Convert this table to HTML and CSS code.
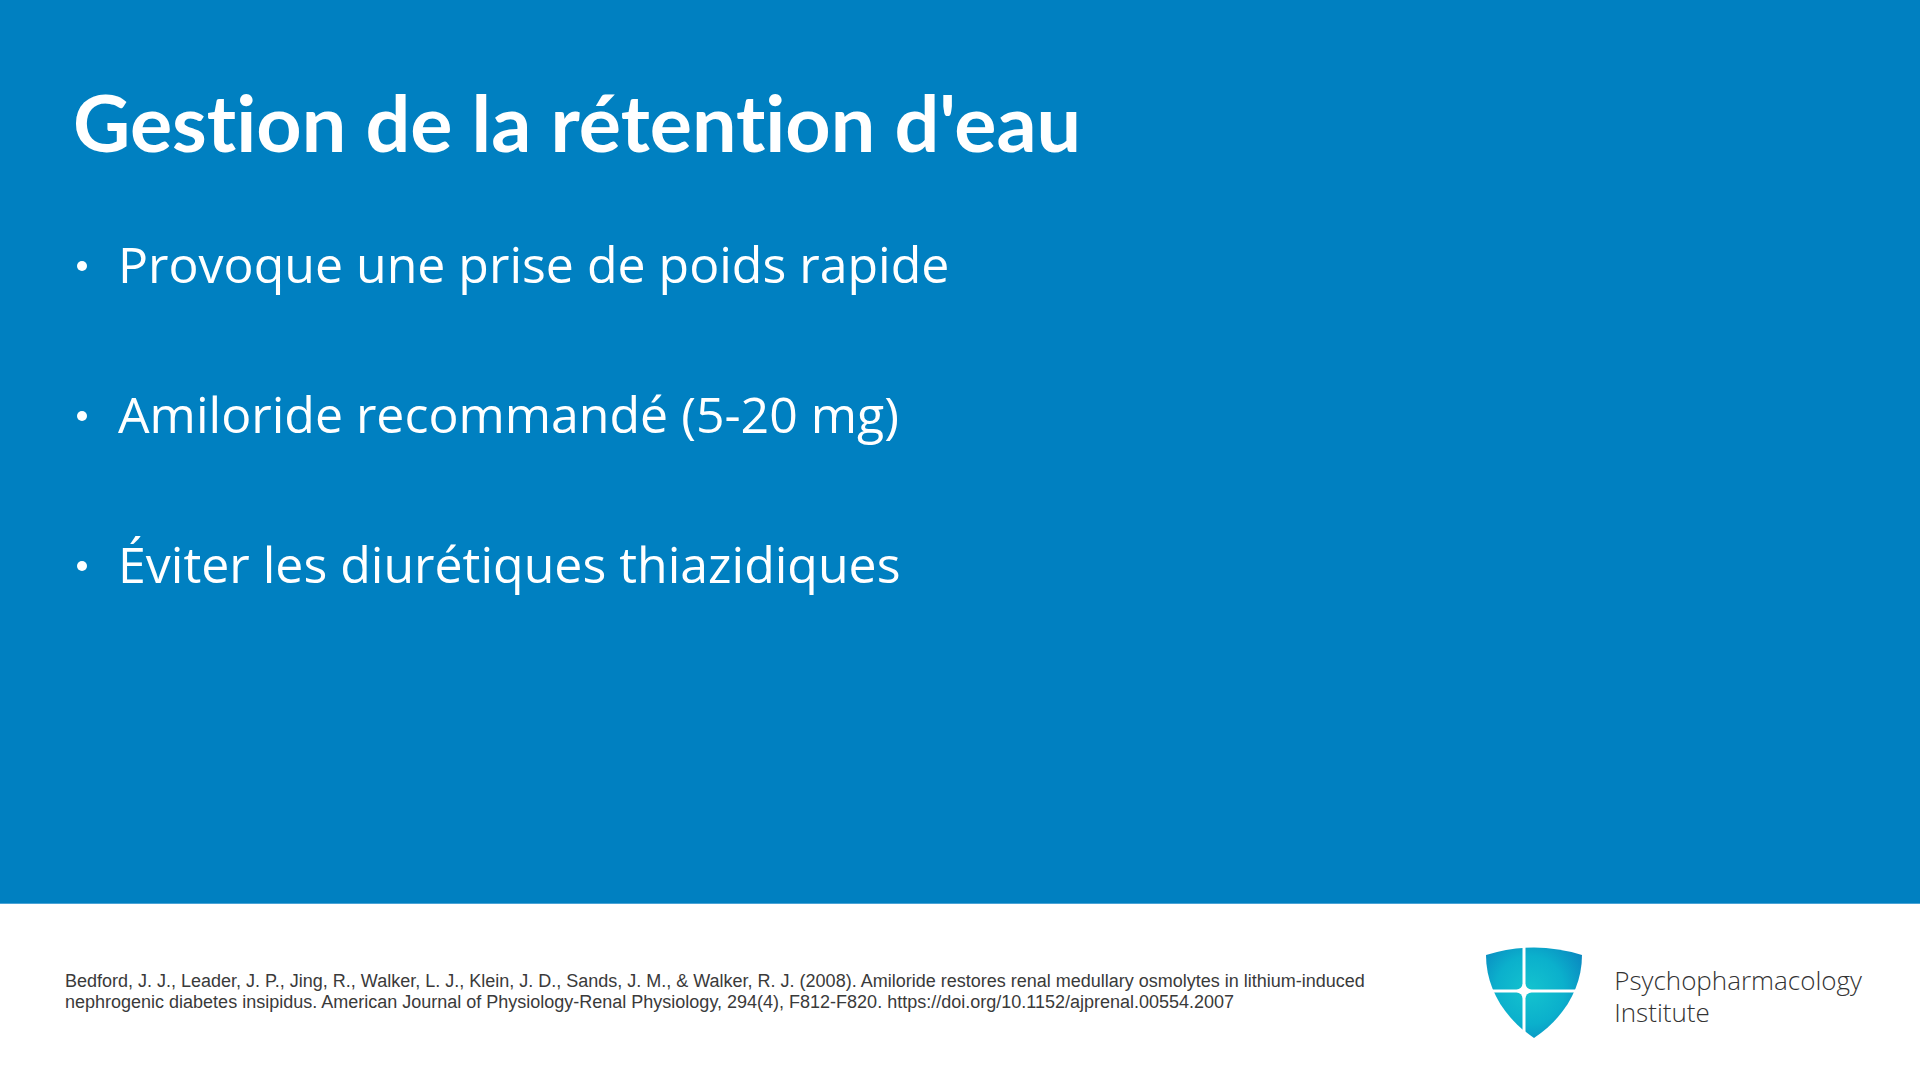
FILE: index.html
```html
<!DOCTYPE html>
<html lang="fr">
<head>
<meta charset="utf-8">
<title>Gestion de la rétention d'eau</title>
<link rel="stylesheet" href="styles.css">
</head>
<body>
<main class="slide">
  <section class="content">
    <h1 class="title">Gestion de la rétention d'eau</h1>
    <ul class="bullets">
      <li class="bullet"><span class="dot"></span><span>Provoque une prise de poids rapide</span></li>
      <li class="bullet"><span class="dot"></span><span>Amiloride recommandé (5-20 mg)</span></li>
      <li class="bullet"><span class="dot"></span><span>Éviter les diurétiques thiazidiques</span></li>
    </ul>
  </section>
  <footer class="footer">
    <p class="citation">Bedford, J. J., Leader, J. P., Jing, R., Walker, L. J., Klein, J. D., Sands, J. M., &amp; Walker, R. J. (2008). Amiloride restores renal medullary osmolytes in lithium-induced<br>nephrogenic diabetes insipidus. American Journal of Physiology-Renal Physiology, 294(4), F812-F820. https://doi.org/10.1152/ajprenal.00554.2007</p>
    <div class="logo">
      <svg class="shield" width="96" height="92" viewBox="0 0 96 92" aria-hidden="true">
        <defs>
          <clipPath id="shieldClip">
            <path d="M0,9 Q48,-6 96,9 C96,42 78,72 48,92 C18,72 0,42 0,9 Z"/>
          </clipPath>
          <radialGradient id="shieldGrad" gradientUnits="userSpaceOnUse" cx="44" cy="44" r="62">
            <stop offset="0" stop-color="#14c3cf"/>
            <stop offset="0.55" stop-color="#0bb0cc"/>
            <stop offset="1" stop-color="#0a88c0"/>
          </radialGradient>
        </defs>
        <g clip-path="url(#shieldClip)" fill="url(#shieldGrad)">
          <rect x="-30" y="-30" width="66.5" height="73.5" rx="6"/>
          <rect x="39.5" y="-30" width="90" height="73.5" rx="6"/>
          <rect x="-30" y="46.5" width="66.5" height="80" rx="6"/>
          <rect x="39.5" y="46.5" width="90" height="80" rx="6"/>
        </g>
      </svg>
      <div class="logo-text">
        <div class="logo-line">Psychopharmacology</div>
        <div class="logo-line">Institute</div>
      </div>
    </div>
  </footer>
</main>
</body>
</html>
```

FILE: styles.css
```css
html, body {
  margin: 0;
  padding: 0;
}

body {
  width: 1920px;
  height: 1080px;
  overflow: hidden;
  background: #ffffff;
}

.slide {
  display: flex;
  flex-direction: column;
  width: 1920px;
  height: 1080px;
}

.content {
  height: 904px;
  background: #0080c1;
  box-sizing: border-box;
  padding: 82px 0 0 73px;
  border-bottom: 1px solid #4aa3d6;
}

.title {
  margin: 0;
  font-family: "Lato", "Open Sans", sans-serif;
  font-weight: 700;
  font-size: 79px;
  line-height: 79px;
  color: #ffffff;
  letter-spacing: 0;
  font-variant-ligatures: none;
}

.bullets {
  list-style: none;
  margin: 28px 0 0 0;
  padding: 0;
}

.bullet {
  display: flex;
  align-items: center;
  height: 150px;
  font-family: "Open Sans", sans-serif;
  font-size: 50px;
  line-height: 150px;
  color: #ffffff;
}

.dot {
  flex: none;
  width: 10px;
  height: 10px;
  border-radius: 50%;
  background: #ffffff;
  margin: 4px 31px 0 4px;
}

.footer {
  flex: 1;
  display: flex;
  align-items: center;
  justify-content: space-between;
  padding: 0 58px 0 65px;
}

.citation {
  margin: 0;
  font-family: "Liberation Sans", Arial, sans-serif;
  font-size: 18px;
  line-height: 21px;
  color: #3a3a3a;
}

.logo {
  display: flex;
  align-items: center;
  gap: 32px;
}

.shield {
  display: block;
  flex: none;
}

.logo-text {
  padding-top: 8px;
  font-family: "Open Sans", sans-serif;
  font-weight: 300;
  font-size: 26px;
  color: #333333;
}

.logo-line {
  height: 32px;
  line-height: 32px;
}
```
